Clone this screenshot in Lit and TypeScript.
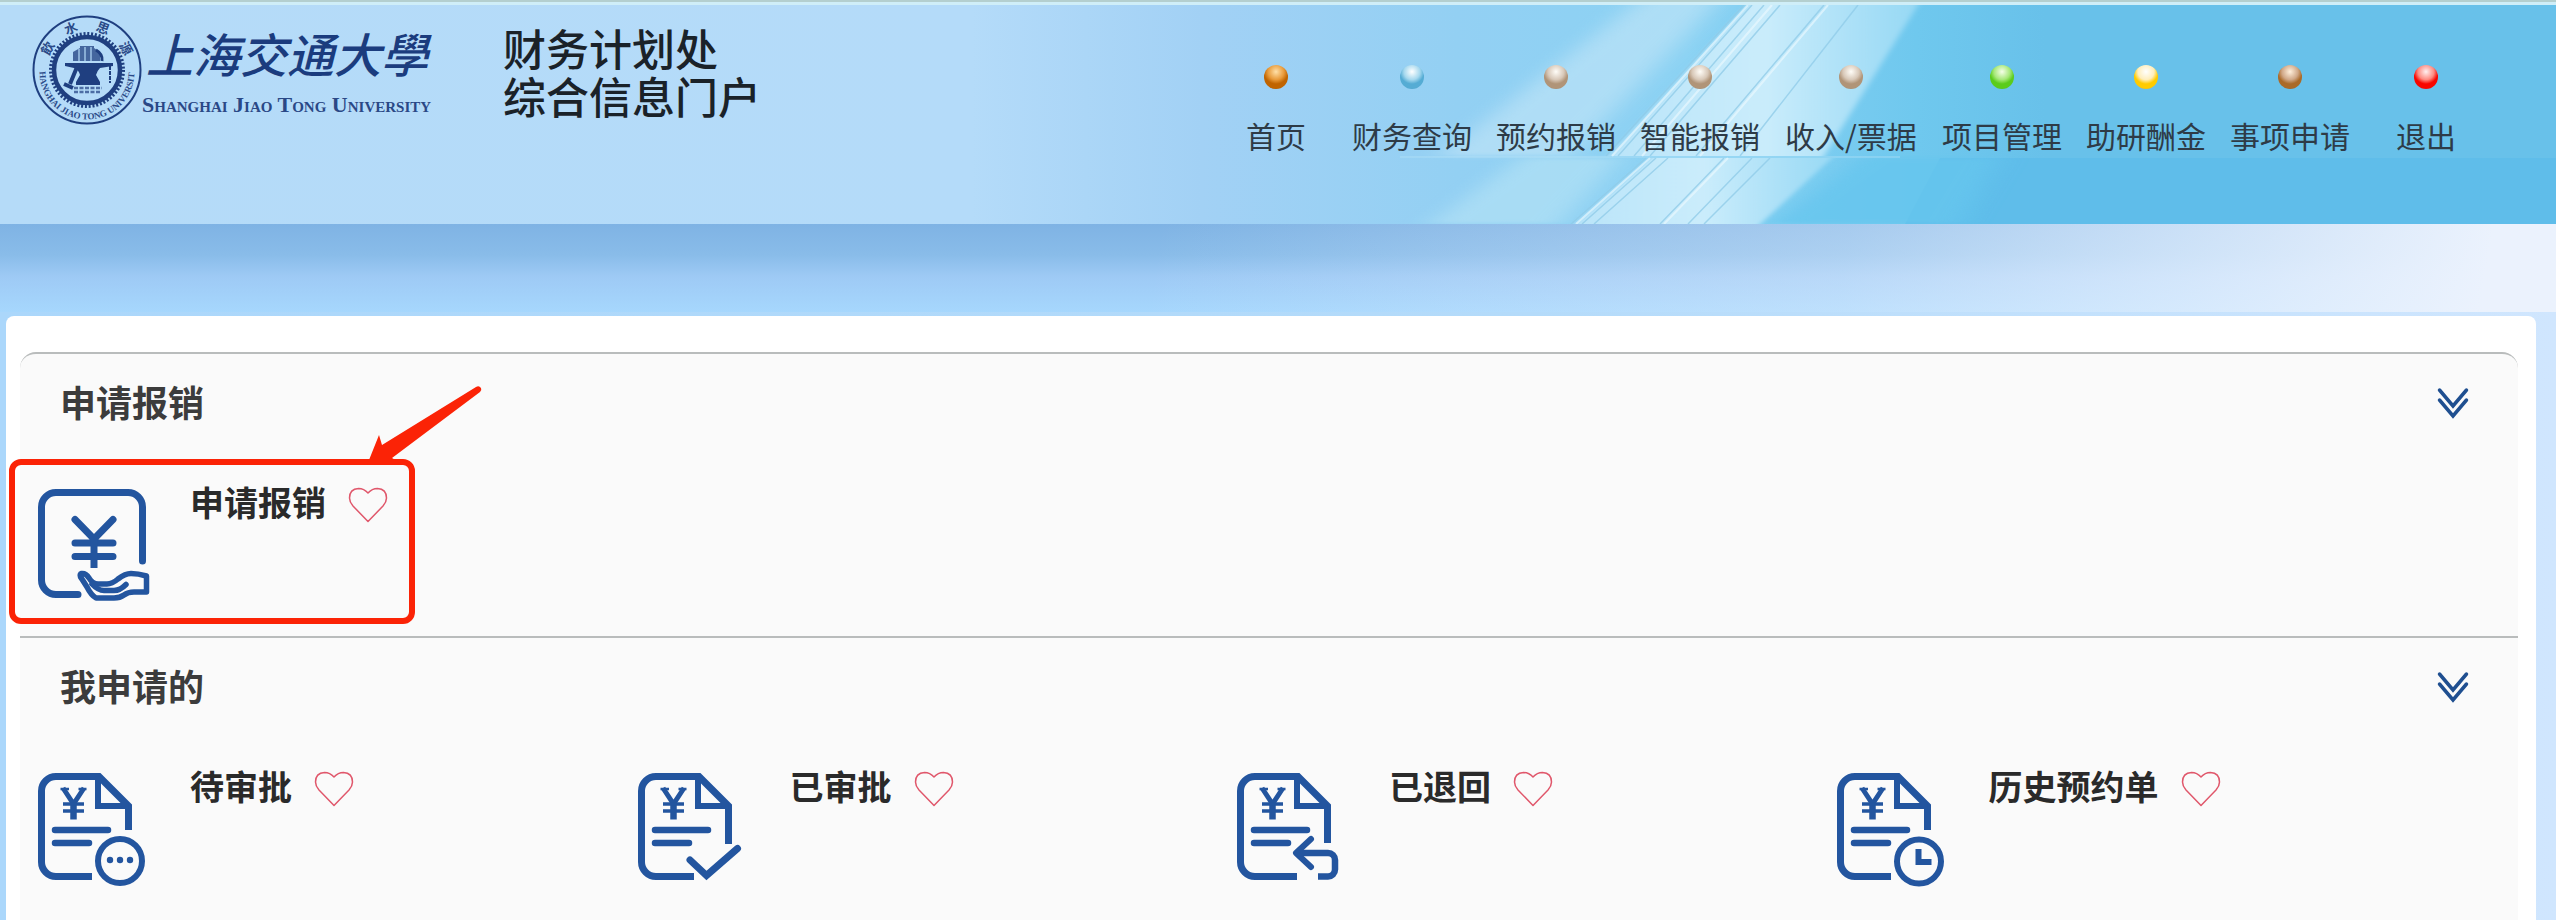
import { LitElement, html, css, svg } from "lit";
import { customElement, property } from "lit/decorators.js";

type NavItem = { label: string; hue: string; wide?: boolean };
type Tile = { label: string; icon: string; marked?: boolean };
type Section = { title: string; tiles: Tile[] };

const NAV: NavItem[] = [
  { label: "首页", hue: "orange" },
  { label: "财务查询", hue: "blue" },
  { label: "预约报销", hue: "tan" },
  { label: "智能报销", hue: "tan" },
  { label: "收入/票据", hue: "tan", wide: true },
  { label: "项目管理", hue: "green" },
  { label: "助研酬金", hue: "yellow" },
  { label: "事项申请", hue: "brown" },
  { label: "退出", hue: "red" },
];

const SECTIONS: Section[] = [
  { title: "申请报销", tiles: [{ label: "申请报销", icon: "hand", marked: true }] },
  {
    title: "我申请的",
    tiles: [
      { label: "待审批", icon: "pending" },
      { label: "已审批", icon: "approved" },
      { label: "已退回", icon: "returned" },
      { label: "历史预约单", icon: "history" },
    ],
  },
];

/* Where the page outline stops on the right and bottom edges, and the badge drawn in the gap. */
const DOCS: Record<string, { right: number; bottom: number; badge: unknown }> = {
  pending: {
    right: 57,
    bottom: 54,
    badge: svg`<circle cx="82" cy="88" r="22" stroke-width="6"/>
      <g fill="#23559f" stroke="none"><circle cx="72" cy="87" r="3.2"/><circle cx="82" cy="87" r="3.2"/><circle cx="92" cy="87" r="3.2"/></g>`,
  },
  approved: {
    right: 71,
    bottom: 56,
    badge: svg`<path d="M52 87L68.500 102.500L99.500 75.500" stroke-linecap="round"/>`,
  },
  returned: {
    right: 70,
    bottom: 60,
    badge: svg`<path d="M74 66L59 80L74 94" stroke-width="6" stroke-linecap="round" stroke-linejoin="round"/>
      <path d="M60 80H91a7 7 0 0 1 7 7v9.500a7 7 0 0 1-7 7H81" stroke-width="6.500"/>`,
  },
  history: {
    right: 57,
    bottom: 54,
    badge: svg`<circle cx="82" cy="88.500" r="22" stroke-width="6"/><path d="M81.500 76V89H94.500" stroke-width="6"/>`,
  },
};

@customElement("tile-icon")
class TileIcon extends LitElement {
  @property() name = "hand";

  static styles = css`
    :host { display: block; width: 116px; height: 127px; }
    svg { display: block; fill: none; stroke: #23559f; stroke-width: 7; }
  `;

  render() {
    return html`<svg width="116" height="127" viewBox="0 -7 116 127" aria-hidden="true">
      ${this.name === "hand" ? this.hand() : this.doc()}
    </svg>`;
  }

  private hand() {
    return svg`
      <path d="M104.500 72V18a14.500 14.500 0 0 0-14.500-14.500H18A14.500 14.500 0 0 0 3.500 18V91A14.500 14.500 0 0 0 18 105.500H40" stroke-linecap="round"/>
      <path d="M37 30.500L56 50L75 30.500M37 54H75M37 67.500H75" stroke-linecap="round" stroke-linejoin="round"/>
      <path d="M56 50V79"/>
      <path d="M43.500 84.500Q48 84 51 89Q54 94.500 60 95H69Q74 95 80 90Q87 84.500 93 84.500Q100 84.500 108.500 87V103H96Q90 103 86 106Q82 109 76 109H58Q53 106 49 98Q44 90 42.500 88Q41.500 85 43.500 84.500Z" stroke-width="5.500" stroke-linejoin="round"/>
      <path d="M54 95Q60 101.500 66 101.500H76Q82 101.500 88 95.500" stroke-width="5.500" stroke-linecap="round"/>`;
  }

  private doc() {
    const d = DOCS[this.name];
    return svg`
      <path d="M${d.bottom} 103.500H18A14.500 14.500 0 0 1 3.500 89V18A14.500 14.500 0 0 1 18 3.500H61L90.500 33V${d.right}"/>
      <path d="M60 3.500V33H90.500" stroke-width="6"/>
      <path d="M25 15L35.500 31L46 15" stroke-width="5"/>
      <path d="M22.500 16H31M40.500 16H48.500" stroke-width="2.500"/>
      <path d="M35.500 29V46.500" stroke-width="6.500"/>
      <path d="M25 31H46M25 38H46" stroke-width="3.500"/>
      <path d="M17 57H70M17 70H51" stroke-width="6.500" stroke-linecap="round"/>
      ${d.badge}`;
  }
}

@customElement("school-seal")
class SchoolSeal extends LitElement {
  static styles = css`
    :host { display: block; width: 110px; height: 110px; }
    svg { display: block; fill: none; stroke: #1f3f80; }
    text { fill: #2a4a88; stroke: none; }
    .latin { font: bold 9px "Liberation Serif", serif; }
    .motto { font: bold 13px "Noto Sans CJK TC", sans-serif; }
    .solid { fill: #1f3f80; stroke: none; }
  `;

  render() {
    return html`<svg width="110" height="110" viewBox="-55 -55 110 110" aria-hidden="true">
      <defs>
        <path id="low" d="M-47.500 2A47.500 47.500 0 0 0 47.500 2" />
      </defs>
      <circle r="53.500" stroke-width="2" />
      <circle r="36" stroke-width="4" stroke-dasharray="2 1.770" />
      <circle r="33" stroke-width="4.500" />
      <text class="latin"><textPath href="#low" startOffset="50%" text-anchor="middle">SHANGHAI JIAO TONG UNIVERSITY</textPath></text>
      <g class="motto" text-anchor="middle">
        <text transform="rotate(-61) translate(0 -40)">飲</text>
        <text transform="rotate(-21) translate(0 -40)">水</text>
        <text transform="rotate(21) translate(0 -40)">思</text>
        <text transform="rotate(61) translate(0 -40)">源</text>
      </g>
      <path class="solid" d="M-22 -7H26V-4L13 -2Q10 1 9 5L13 12V15H-11V12L-7 5Q-8 0 -13 -2L-22 -4Z" />
      <path class="solid" d="M-14 -9V-18L-7 -22V-24H7V-22L13 -18V-9Z" opacity="0.75" />
      <path d="M-8 -21V-9M-2 -23V-9M4 -23V-9" stroke="#b5dbf8" stroke-width="1.200" />
      <path d="M9 -20Q16 -16 15 -9" stroke-width="3" />
      <path d="M-10 -3L-17 14M-23 14L-14 18" stroke-width="4" />
      <path d="M23 -4V13" stroke-width="2" stroke-dasharray="4 1" />
      <path d="M-13 18H15M-13 22H13" stroke-width="2.500" stroke-dasharray="4 1.500" opacity="0.7" />
    </svg>`;
  }
}

@customElement("app-root")
class AppRoot extends LitElement {
  static styles = css`
    :host {
      display: block;
      min-height: 100vh;
      box-sizing: border-box;
      font-family: "Noto Sans CJK SC", sans-serif;
      color: #2f2f2f;
      background: linear-gradient(90deg, #abd7fb 0%, #b4dbfa 60%, #d0e6fe 100%);
    }
    h1, h2, ul, p { margin: 0; padding: 0; font-weight: inherit; }
    a { color: inherit; text-decoration: none; }
    button { padding: 0; border: 0; background: none; cursor: pointer; line-height: 0; }

    .header {
      position: relative;
      display: flex;
      justify-content: space-between;
      align-items: flex-start;
      height: 224px;
      box-sizing: border-box;
      padding: 15px 66px 0 32px;
      background: linear-gradient(90deg, #b5dbf8 0%, #b4dbf9 38%, #a2d1f5 47%, #93d0f3 57%, #8bd2f3 66%, #6fc8ee 75%, #68c1ea 80%, #68c1ea 100%);
    }
    .rays { position: absolute; inset: 0; width: 100%; height: 100%; }
    .brand, .nav { position: relative; display: flex; }
    .wordmark { display: flex; flex-direction: column; color: #1b3c7e; }
    .zh { padding-left: 4px; font-size: 47px; line-height: 76px; font-weight: 500; font-style: italic; }
    .en { font: bold 22px/28px "Liberation Serif", serif; font-variant: small-caps; color: #2a4886; white-space: nowrap; }
    .title { margin-left: 72px; padding-top: 8px; font-size: 43px; line-height: 48px; font-weight: 500; color: #1a2229; white-space: nowrap; }

    .nav { list-style: none; padding-top: 50px; }
    .nav-link {
      display: flex;
      flex-direction: column;
      align-items: center;
      gap: 24px;
      min-width: 128px;
      box-sizing: border-box;
      padding: 0 12px;
      font-size: 30px;
      line-height: 44px;
      color: #2e3b47;
      white-space: nowrap;
    }
    .wide { min-width: 158px; }
    .ball {
      width: 24px;
      height: 24px;
      border-radius: 50%;
      background: radial-gradient(circle at 50% 28%, var(--shine) 0%, var(--mid) 38%, var(--base) 58%, var(--base) 76%, var(--edge) 100%);
    }
    .orange { --shine: #ffe0a8; --mid: #e89a3a; --base: #c06400; --edge: #8f5a1c; }
    .blue { --shine: #ffffff; --mid: #a5d8ee; --base: #55acd4; --edge: #4f9fc6; }
    .tan { --shine: #fffdf8; --mid: #d8c8b8; --base: #b09478; --edge: #93826f; }
    .green { --shine: #f6ffe8; --mid: #a6e878; --base: #5bcc1c; --edge: #51a83c; }
    .yellow { --shine: #ffffff; --mid: #ffeebb; --base: #ffcb00; --edge: #d8a83c; }
    .brown { --shine: #fff0dc; --mid: #d0a888; --base: #aa6a28; --edge: #82603c; }
    .red { --shine: #fff0f0; --mid: #ff8a80; --base: #f80600; --edge: #b83038; }

    .band {
      height: 88px;
      background:
        linear-gradient(100deg, rgba(235, 243, 254, 0) 45%, rgba(226, 238, 253, 0.4) 72%, rgba(228, 239, 253, 0.75) 85%, #ebf2fd 97%),
        linear-gradient(180deg, #7fb3e4 0%, #89bce9 35%, #9ecaf5 60%, #a6d7fd 100%);
    }

    .card {
      margin: 4px 20px 0 6px;
      padding: 36px 18px 0 14px;
      border-radius: 8px 8px 0 0;
      background: #fff;
    }
    .section { position: relative; border-top: 2px solid #b9bcbc; background: #fafafa; }
    .section:first-child { border-radius: 16px 16px 0 0; }
    .section-head {
      display: flex;
      align-items: center;
      justify-content: space-between;
      height: 98px;
      box-sizing: border-box;
      padding: 0 48px 0 40px;
    }
    .section-title { padding-bottom: 4px; font-size: 36px; line-height: 44px; font-weight: 700; color: #3c3c3c; }
    .tiles { display: grid; grid-template-columns: repeat(4, 24%); list-style: none; padding: 30px 0 27px; }
    .tile { position: relative; display: flex; align-items: flex-start; padding-left: 18px; }
    .tile-link { display: flex; gap: 36px; }
    .tile-label { font-size: 34px; line-height: 40px; font-weight: 700; color: #2a2a2a; white-space: nowrap; }
    .heart { margin: 5px 0 0 22px; }

    .mark {
      position: absolute;
      left: -11px;
      top: -23px;
      width: 406px;
      height: 165px;
      box-sizing: border-box;
      border: 6px solid #fb2306;
      border-radius: 12px;
      pointer-events: none;
    }
    .arrow { position: absolute; right: -76px; top: -84px; }
  `;

  private rays() {
    return html`<svg class="rays" viewBox="0 0 2556 224" preserveAspectRatio="none" aria-hidden="true">
      <defs>
        <linearGradient id="beam" x1="0" x2="1">
          <stop offset="0" stop-color="#c2e8fa" stop-opacity="0.85" />
          <stop offset="0.5" stop-color="#ceeefc" stop-opacity="0.95" />
          <stop offset="1" stop-color="#a4def6" stop-opacity="0.75" />
        </linearGradient>
        <filter id="soft" x="-30%" y="-10%" width="160%" height="120%"><feGaussianBlur stdDeviation="14 2" /></filter>
        <filter id="edge" x="-10%" y="-5%" width="120%" height="110%"><feGaussianBlur stdDeviation="3 0" /></filter>
      </defs>
      <path d="M1940 158H2556V224H1905Z" fill="#5cbcea" opacity="0.8" />
      <path d="M1640 0H1720L1570 156H1440Z" fill="#c4e6f8" opacity="0.6" filter="url(#soft)" />
      <path d="M1520 158H1620L1560 224H1430Z" fill="#b8e4f6" opacity="0.6" filter="url(#soft)" />
      <path d="M1860 158L2000 158L1960 224H1770Z" fill="#66c6ee" opacity="0.8" filter="url(#soft)" />
      <path d="M1748 5H1918L1824 156H1610Z" fill="url(#beam)" filter="url(#edge)" />
      <path d="M1651 158H1832L1760 224H1576Z" fill="url(#beam)" filter="url(#edge)" />
      <g fill="none" stroke="#8fcbe8" stroke-width="1.500" opacity="0.75">
        <path d="M1744 5L1606 156M1752 5L1618 156M1764 5L1634 156M1780 5L1650 156M1824 5L1696 156M1858 5L1740 156" />
        <path d="M1646 158L1571 224M1656 158L1582 224M1668 158L1594 224M1724 158L1660 224M1752 158L1688 224M1770 158L1704 224" />
      </g>
      <g fill="none" stroke="#eefaff" stroke-width="2" opacity="0.6">
        <path d="M1748 5L1612 156M1772 5L1642 156M1828 5L1700 156M1650 158L1576 224M1728 158L1664 224" />
      </g>
      <path d="M1400 157H1900" stroke="#b6e3f7" opacity="0.7" />
      <path d="M0 1H2556" stroke="#b4cfcf" stroke-width="2" />
      <path d="M0 3.500H2556" stroke="#cfeef8" stroke-width="3" />
    </svg>`;
  }

  private heart(label: string) {
    return html`<button class="heart" type="button" aria-label="收藏 ${label}">
      <svg width="40" height="36" viewBox="0 0 40 36" fill="none" stroke="#e0576b" stroke-width="1.500" stroke-linejoin="round">
        <path d="M20 34.500L5 19Q1.500 15 1.500 11Q1.500 2 10.500 1.500Q16 1.500 20 6Q24 1.500 29.500 1.500Q38.500 2 38.500 11Q38.500 15 35 19Z" />
      </svg>
    </button>`;
  }

  private tile(t: Tile) {
    return html`<li class="tile">
      <a class="tile-link" href="#${t.icon}">
        <tile-icon name=${t.icon}></tile-icon>
        <span class="tile-label">${t.label}</span>
      </a>
      ${this.heart(t.label)}
      ${t.marked
        ? html`<div class="mark">
            <svg class="arrow" width="120" height="88" viewBox="0 0 120 88" aria-hidden="true">
              <path fill="#fb2306" d="M111 6Q114 4 116 7Q117 9 115 11L27 77L39 84L2 84L14 54L17 64Z" />
            </svg>
          </div>`
        : null}
    </li>`;
  }

  render() {
    return html`
      <header class="header">
        ${this.rays()}
        <div class="brand">
          <school-seal></school-seal>
          <div class="wordmark">
            <span class="zh">上海交通大學</span>
            <span class="en">Shanghai Jiao Tong University</span>
          </div>
          <h1 class="title">财务计划处<br />综合信息门户</h1>
        </div>
        <nav>
          <ul class="nav">
            ${NAV.map(
              (n) => html`<li>
                <a class="nav-link ${n.wide ? "wide" : ""}" href="#"><span class="ball ${n.hue}"></span>${n.label}</a>
              </li>`
            )}
          </ul>
        </nav>
      </header>
      <div class="band"></div>
      <main class="card">
        ${SECTIONS.map(
          (s) => html`<section class="section">
            <div class="section-head">
              <h2 class="section-title">${s.title}</h2>
              <button type="button" aria-label="展开 ${s.title}">
                <svg width="34" height="34" viewBox="0 0 34 34" fill="none" stroke="#1f4f90" stroke-width="3.500" stroke-linecap="round">
                  <path d="M3.500 4L17 20L30.500 4M3.500 14L17 30L30.500 14" />
                </svg>
              </button>
            </div>
            <ul class="tiles">${s.tiles.map((t) => this.tile(t))}</ul>
          </section>`
        )}
      </main>
    `;
  }
}
